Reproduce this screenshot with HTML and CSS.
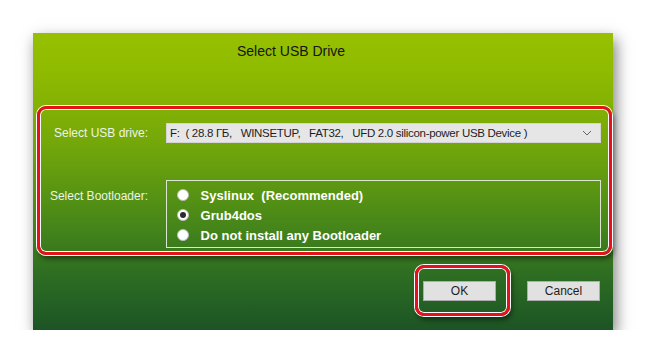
FILE: index.html
```html
<!DOCTYPE html>
<html lang="en">
  <head>
    <meta charset="UTF-8" />
    <title>Select USB Drive</title>
    <link rel="stylesheet" href="styles.css">
  </head>
  <body>
    <div class="window">
      <h1 class="title">Select USB Drive</h1>

      <section class="panel">
        <label class="label">Select USB drive:</label>
        <div class="combo">
          <span class="combo-text">F:  ( 28.8 ГБ,   WINSETUP,   FAT32,   UFD 2.0 silicon-power USB Device )</span>
          <svg class="chevron" width="10" height="6" viewBox="0 0 10 6">
            <polyline points="1,1 5,5 9,1" fill="none" stroke="#666" stroke-width="1" />
          </svg>
        </div>

        <label class="label label-boot">Select Bootloader:</label>
        <div class="group">
          <label class="option"><input type="radio" name="boot" /> Syslinux  (Recommended)</label>
          <label class="option"><input type="radio" name="boot" checked /> Grub4dos</label>
          <label class="option"><input type="radio" name="boot" /> Do not install any Bootloader</label>
        </div>
      </section>

      <footer class="buttons">
        <span class="mark">
          <button class="btn">OK</button>
        </span>
        <button class="btn">Cancel</button>
      </footer>
    </div>
  </body>
</html>
```

FILE: styles.css
```css
* {
  margin: 0;
  padding: 0;
  box-sizing: border-box;
}

body {
  background: #fff;
  padding: 33px 0 0 33px;
  font-family: "Liberation Sans", Arial, sans-serif;
}

/* WINDOW */
.window {
  width: 580px;
  height: 297px;
  display: flex;
  flex-direction: column;
  background: linear-gradient(
    to bottom,
    #97c000 0%,
    #8fbb00 12%,
    #84b204 24%,
    #72a70a 38%,
    #5b9612 52%,
    #44841a 66%,
    #2f6f21 80%,
    #256224 90%,
    #1c5425 100%
  );
  box-shadow: 3px 6px 14px rgba(0, 0, 0, 0.5);
}

.title {
  height: 73px;
  padding: 10px 0 0 204px;
  font-size: 14px;
  font-weight: normal;
  color: #141414;
}

/* HIGHLIGHTED PANEL */
.panel {
  height: 149px;
  margin: 0 1px 0 4px;
  border: 3px solid #e3121b;
  border-radius: 9px;
  box-shadow: 0 0 0 1px #fff, inset 0 0 0 1px #fff, 2px 4px 5px rgba(0, 0, 0, 0.45);
  display: grid;
  grid-template-columns: 108px 435px;
  grid-template-rows: 20px 68px;
  column-gap: 18px;
  row-gap: 37px;
  padding-top: 14px;
}

.label {
  font-size: 12px;
  color: #eef3e6;
  text-align: right;
  line-height: 20px;
}

.label-boot {
  padding-top: 6px;
}

.combo {
  display: flex;
  align-items: center;
  justify-content: space-between;
  background: #e6e6e6;
  border: 1px solid #d4d4d4;
  padding: 0 8px 0 3px;
  font-size: 11.5px;
  letter-spacing: -0.3px;
  color: #1e1e1e;
}

.combo-text {
  white-space: pre;
}

.group {
  border: 1px solid #dbe6cf;
  padding: 4px 0 0 10px;
  display: flex;
  flex-direction: column;
}

.option {
  display: flex;
  align-items: center;
  gap: 8px;
  height: 20px;
  font-size: 13px;
  font-weight: bold;
  color: #fff;
  white-space: pre;
}

.option input {
  appearance: none;
  width: 12px;
  height: 12px;
  border-radius: 50%;
  background: #fff;
  border: 1px solid #bdbdbd;
  display: grid;
  place-items: center;
}

.option input:checked::after {
  content: "";
  width: 6px;
  height: 6px;
  border-radius: 50%;
  background: #2b2b2b;
}

/* BUTTONS */
.buttons {
  display: flex;
  justify-content: flex-end;
  align-items: center;
  gap: 17px;
  margin-top: 10px;
  padding-right: 13px;
}

.mark {
  display: block;
  padding: 13px 11px 12px 5px;
  border: 3px solid #e3121b;
  border-radius: 9px;
  box-shadow: 0 0 0 1px #fff, inset 0 0 0 1px #fff, 2px 4px 5px rgba(0, 0, 0, 0.45);
}

.btn {
  display: block;
  width: 73px;
  height: 20px;
  background: #e1e1e1;
  border: 1px solid #adadad;
  font-family: inherit;
  font-size: 12px;
  color: #1e1e1e;
}
```
